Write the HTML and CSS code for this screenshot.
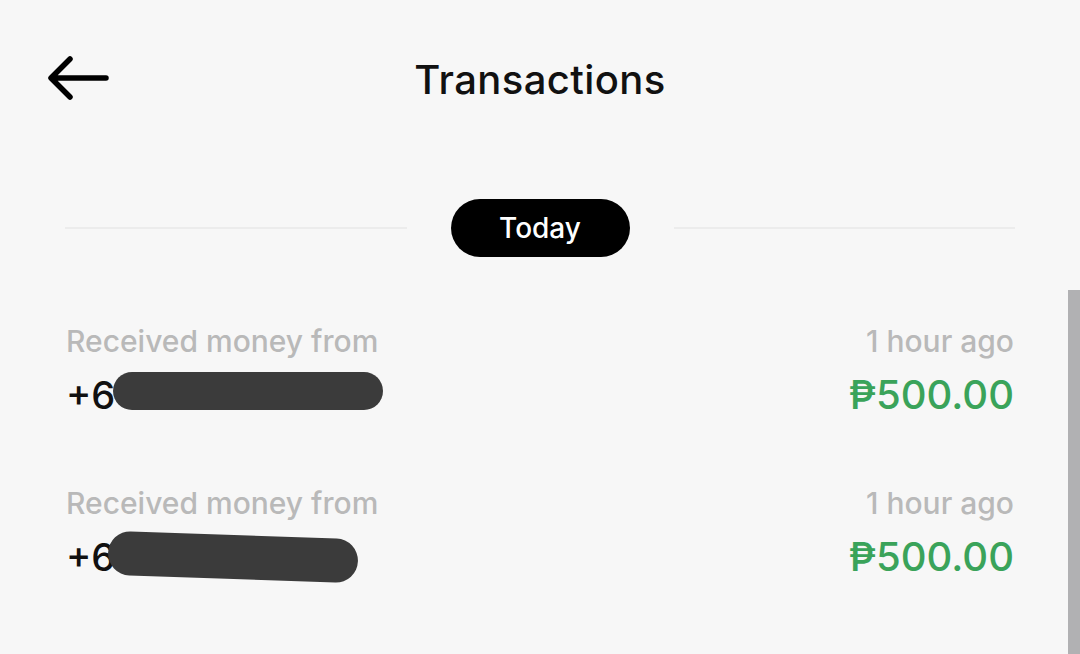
FILE: index.html
```html
<!DOCTYPE html>
<html lang="en">
<head>
  <meta charset="UTF-8">
  <meta name="viewport" content="width=device-width, initial-scale=1.0">
  <title>Transactions</title>
  <link rel="stylesheet" href="styles.css">
</head>
<body>
  <header class="top-bar">
    <button class="back" aria-label="Back">
      <svg width="64" height="48" viewBox="0 0 64 48">
        <path d="M60 24 H6 M24 5 L5 24 L24 43" fill="none" stroke="#000" stroke-width="5.5" stroke-linecap="round" stroke-linejoin="round"/>
      </svg>
    </button>
    <h1>Transactions</h1>
  </header>

  <div class="day-divider">
    <span class="line"></span>
    <span class="pill">Today</span>
    <span class="line"></span>
  </div>

  <ul class="list">
    <li class="item">
      <div class="left">
        <div class="label">Received money from</div>
        <div class="number">+6<span class="mask mask-a"></span></div>
      </div>
      <div class="right">
        <div class="label">1 hour ago</div>
        <div class="amount">₱500.00</div>
      </div>
    </li>
    <li class="item">
      <div class="left">
        <div class="label">Received money from</div>
        <div class="number">+6<span class="mask mask-b"></span></div>
      </div>
      <div class="right">
        <div class="label">1 hour ago</div>
        <div class="amount">₱500.00</div>
      </div>
    </li>
  </ul>

  <div class="scroll-thumb"></div>
</body>
</html>
```

FILE: styles.css
```css
body {
  margin: 0;
  background-color: #f7f7f7;
  font-family: "Inter", "Noto Sans", sans-serif;
  color: #111;
  height: 654px;
  overflow: hidden;
  position: relative;
}
.top-bar {
  display: flex;
  align-items: center;
  justify-content: center;
  position: relative;
  height: 78px;
  padding-top: 40px;
}
.back {
  position: absolute;
  left: 46px;
  top: 54px;
  background: none;
  border: none;
  padding: 0;
}
.back svg {
  display: block;
}
.top-bar h1 {
  margin: 0;
  font-size: 40px;
  font-weight: 500;
  letter-spacing: 0.4px;
  color: #111;
}
.day-divider {
  display: flex;
  align-items: center;
  padding: 0 65px;
  margin-top: 81px;
  gap: 44px;
}
.line {
  flex: 1;
  height: 2px;
  background-color: #ececec;
}
.pill {
  background-color: #000;
  color: #fff;
  border-radius: 29px;
  height: 58px;
  width: 179px;
  display: flex;
  align-items: center;
  justify-content: center;
  font-size: 28px;
  font-weight: 500;
}
.list {
  list-style: none;
  margin: 66px 0 0;
  padding: 0 66px;
}
.item {
  display: flex;
  justify-content: space-between;
  margin-bottom: 62px;
}
.right {
  text-align: right;
}
.label {
  font-size: 30px;
  color: #b9b9b9;
  font-weight: 500;
  line-height: 36px;
}
.number {
  font-size: 38px;
  line-height: 56px;
  margin-top: 8px;
  color: #111;
  font-weight: 500;
  position: relative;
}
.amount {
  font-size: 40px;
  line-height: 56px;
  margin-top: 8px;
  color: #3aa35a;
  font-weight: 500;
}
.mask {
  position: absolute;
  background-color: #3b3b3b;
  border-radius: 20px;
}
.mask-a {
  left: 47px;
  top: 5px;
  width: 270px;
  height: 38px;
}
.mask-b {
  left: 42px;
  top: 6px;
  width: 250px;
  height: 44px;
  border-radius: 22px;
  transform: rotate(2deg);
}
.scroll-thumb {
  position: absolute;
  right: 0;
  top: 290px;
  width: 12px;
  bottom: 0;
  background-color: #b1b1b3;
}
```
